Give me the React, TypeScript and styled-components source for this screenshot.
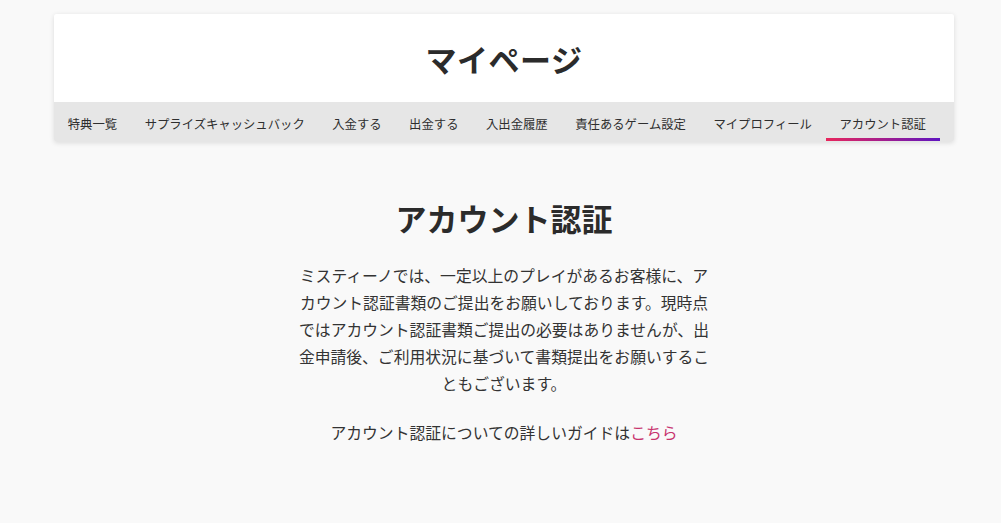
import styled, { createGlobalStyle } from "styled-components";

const GlobalStyle = createGlobalStyle`
  html, body {
    margin: 0;
    padding: 0;
    background: #f9f9f9;
  }
  body {
    font-family: "Noto Sans CJK JP", "Noto Sans", sans-serif;
    color: #333;
  }
`

const Page = styled.div`
  width: 900px;
  margin: 0 0 0 54px;
  padding-top: 14px;
`

const HeaderCard = styled.header`
  border-radius: 3px;
  overflow: hidden;
  box-shadow: 0 1px 5px rgba(0, 0, 0, 0.12);
`

const TitleBox = styled.div`
  height: 88px;
  background: #fff;
  display: flex;
  align-items: center;
  justify-content: center;
`

const PageTitle = styled.h1`
  margin: 0;
  font-size: 31px;
  font-weight: 700;
  color: #2b2b2b;
  letter-spacing: 0.5px;
`

const Nav = styled.nav`
  height: 40px;
  background: #e6e6e6;
  display: flex;
  align-items: stretch;
`

const NavItem = styled.a<{ $active?: boolean }>`
  position: relative;
  display: flex;
  align-items: center;
  padding: 3px 13.75px 0;
  font-size: 12.35px;
  color: #2e2e2e;
  text-decoration: none;
  white-space: nowrap;
  cursor: pointer;

  &::after {
    content: "";
    display: ${(p) => (p.$active ? "block" : "none")};
    position: absolute;
    left: 0;
    right: 0;
    bottom: 1px;
    height: 3px;
    background: linear-gradient(90deg, #e8265c, #5f15c0);
  }
`

const Content = styled.main`
  display: flex;
  flex-direction: column;
  align-items: center;
  text-align: center;
  padding-top: 54px;
`

const SectionTitle = styled.h2`
  margin: 0 0 22px;
  font-size: 31px;
  font-weight: 700;
  color: #2b2b2b;
  line-height: 44px;
`

const Paragraph = styled.p`
  margin: 0 0 22px;
  width: 416px;
  font-size: 15.8px;
  line-height: 27px;
  color: #333;
`

const GuideLine = styled.p`
  margin: 0;
  font-size: 15.8px;
  line-height: 27px;
  color: #333;
`

const Link = styled.a`
  color: #c8336e;
  text-decoration: none;
`

const navItems = [
  "特典一覧",
  "サプライズキャッシュバック",
  "入金する",
  "出金する",
  "入出金履歴",
  "責任あるゲーム設定",
  "マイプロフィール",
  "アカウント認証",
]

export default function App() {
  return (
    <>
      <GlobalStyle />
      <Page>
        <HeaderCard>
          <TitleBox>
            <PageTitle>マイページ</PageTitle>
          </TitleBox>
          <Nav>
            {navItems.map((item) => (
              <NavItem key={item} $active={item === "アカウント認証"}>
                {item}
              </NavItem>
            ))}
          </Nav>
        </HeaderCard>
        <Content>
          <SectionTitle>アカウント認証</SectionTitle>
          <Paragraph>
            ミスティーノでは、一定以上のプレイがあるお客様に、アカウント認証書類のご提出をお願いしております。現時点ではアカウント認証書類ご提出の必要はありませんが、出金申請後、ご利用状況に基づいて書類提出をお願いすることもございます。
          </Paragraph>
          <GuideLine>
            アカウント認証についての詳しいガイドは<Link>こちら</Link>
          </GuideLine>
        </Content>
      </Page>
    </>
  )
}
